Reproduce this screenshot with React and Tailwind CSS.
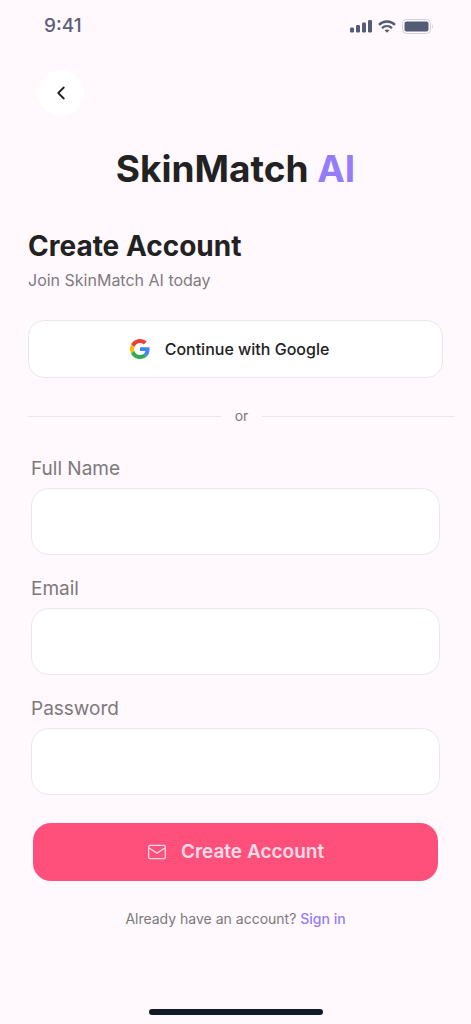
import React from 'react';
import { ChevronLeft, Mail } from 'lucide-react';

const FIELDS = [
  { id: 'name', label: 'Full Name', type: 'text' },
  { id: 'email', label: 'Email', type: 'email' },
  { id: 'password', label: 'Password', type: 'password' },
];

const SignalIcon = () => (
  <svg width="22" height="13" viewBox="0 0 22 13" fill="#535c74" aria-hidden="true">
    <rect x="0" y="7.5" width="4" height="5" rx="1.2" />
    <rect x="6" y="5" width="4" height="7.5" rx="1.2" />
    <rect x="12" y="2.5" width="4" height="10" rx="1.2" />
    <rect x="18" y="0" width="4" height="12.5" rx="1.2" />
  </svg>
);

const WifiIcon = () => (
  <svg width="18" height="13" viewBox="0 0 18 13" fill="none" stroke="#535c74" strokeWidth="2.4" aria-hidden="true">
    <path d="M1 4.8C5.5 0.4 12.5 0.4 17 4.8" />
    <path d="M4 8.2C6.9 5.4 11.1 5.4 14 8.2" />
    <path d="M6.6 10.3C8 9.2 10 9.2 11.4 10.3L9 12.7Z" fill="#535c74" stroke="none" />
  </svg>
);

const BatteryIcon = () => (
  <svg width="32" height="15" viewBox="0 0 32 15" fill="none" aria-hidden="true">
    <rect x="0.5" y="0.5" width="28" height="14" rx="4" stroke="#d3d0dc" />
    <rect x="2.5" y="2.5" width="24" height="10" rx="2" fill="#535c74" />
    <path d="M30 5.5C31.3 6 31.3 9 30 9.5Z" fill="#d3d0dc" />
  </svg>
);

const GoogleIcon = () => (
  <svg width="20" height="20" viewBox="0 0 48 48" aria-hidden="true">
    <path fill="#EA4335" d="M24 9.5c3.54 0 6.71 1.22 9.21 3.6l6.85-6.85C35.9 2.38 30.47 0 24 0 14.62 0 6.51 5.38 2.56 13.22l7.98 6.19C12.43 13.72 17.74 9.5 24 9.5z" />
    <path fill="#4285F4" d="M46.98 24.55c0-1.57-.15-3.09-.38-4.55H24v9.02h12.94c-.58 2.96-2.26 5.48-4.78 7.18l7.73 6c4.51-4.18 7.09-10.36 7.09-17.65z" />
    <path fill="#FBBC05" d="M10.53 28.59c-.48-1.45-.76-2.99-.76-4.59s.27-3.14.76-4.59l-7.98-6.19C.92 16.46 0 20.12 0 24c0 3.88.92 7.54 2.56 10.78l7.97-6.19z" />
    <path fill="#34A853" d="M24 48c6.48 0 11.93-2.13 15.89-5.81l-7.73-6c-2.15 1.45-4.92 2.3-8.16 2.3-6.26 0-11.57-4.22-13.47-9.91l-7.98 6.19C6.51 42.62 14.62 48 24 48z" />
  </svg>
);

const StatusBar = () => (
  <div className="flex h-[52px] items-center justify-between pl-11 pr-[37px]">
    <span className="text-[19px] font-medium text-[#5b6078]">9:41</span>
    <div className="flex items-center gap-[6px]">
      <SignalIcon />
      <WifiIcon />
      <BatteryIcon />
    </div>
  </div>
);

const Field = ({ id, label, type }) => (
  <div className="flex flex-col gap-[5px]">
    <label htmlFor={id} className="text-[19px] leading-7 text-[#7d787b]">{label}</label>
    <input
      id={id}
      name={id}
      type={type}
      className="h-[67px] w-full rounded-[18px] border border-[#ebe7ed] bg-white px-5 text-lg text-[#222222] outline-none focus:border-[#937dfb]"
    />
  </div>
);

const App = () => {
  return (
    <div className="flex min-h-screen flex-col bg-[#fff8fd] font-['Inter',sans-serif] text-[#222222]">
      <StatusBar />

      <main className="flex flex-1 flex-col px-7">
        <button
          type="button"
          aria-label="Back"
          className="ml-[10px] mt-[18px] flex size-[46px] items-center justify-center rounded-full bg-white"
        >
          <ChevronLeft size={22} strokeWidth={2} />
        </button>

        <h1 className="mt-7 text-center text-[37px] font-bold leading-[50px]">
          SkinMatch <span className="text-[#937dfb]">AI</span>
        </h1>

        <h2 className="mt-[34px] text-[28px] font-bold leading-9">Create Account</h2>
        <p className="mt-1 text-[16px] leading-6 text-[#807b7f]">Join SkinMatch AI today</p>

        <button
          type="button"
          className="mt-7 flex h-[58px] items-center justify-center gap-[15px] rounded-2xl border border-[#ebe7ed] bg-white pr-3 text-[16px] font-medium"
        >
          <GoogleIcon />
          Continue with Google
        </button>

        <div className="-mr-3 mt-[26px] flex items-center gap-[14px]">
          <div className="h-px flex-1 bg-[#ebe4eb]" />
          <span className="text-[14px] leading-6 text-[#7d787b]">or</span>
          <div className="h-px flex-1 bg-[#ebe4eb]" />
        </div>

        <form className="mt-[27px] flex flex-col gap-5 px-[3px]" onSubmit={(e) => e.preventDefault()}>
          {FIELDS.map((field) => (
            <Field key={field.id} {...field} />
          ))}

          <button
            type="submit"
            className="mx-[2px] mt-2 flex h-[58px] items-center justify-center gap-[14px] rounded-[18px] bg-[#ff507b] text-[19px] font-semibold text-[#ffdce7]"
          >
            <Mail size={20} strokeWidth={1.5} />
            Create Account
          </button>
        </form>

        <p className="mt-[26px] text-center text-[14px] leading-6 text-[#7d787b]">
          Already have an account?{' '}
          <a href="#signin" className="font-medium text-[#937dfb]">Sign in</a>
        </p>
      </main>

      {/* Home indicator */}
      <div className="mx-auto mb-[9px] h-[6px] w-[174px] rounded-full bg-[#111a27]" />
    </div>
  );
};

export default App;
